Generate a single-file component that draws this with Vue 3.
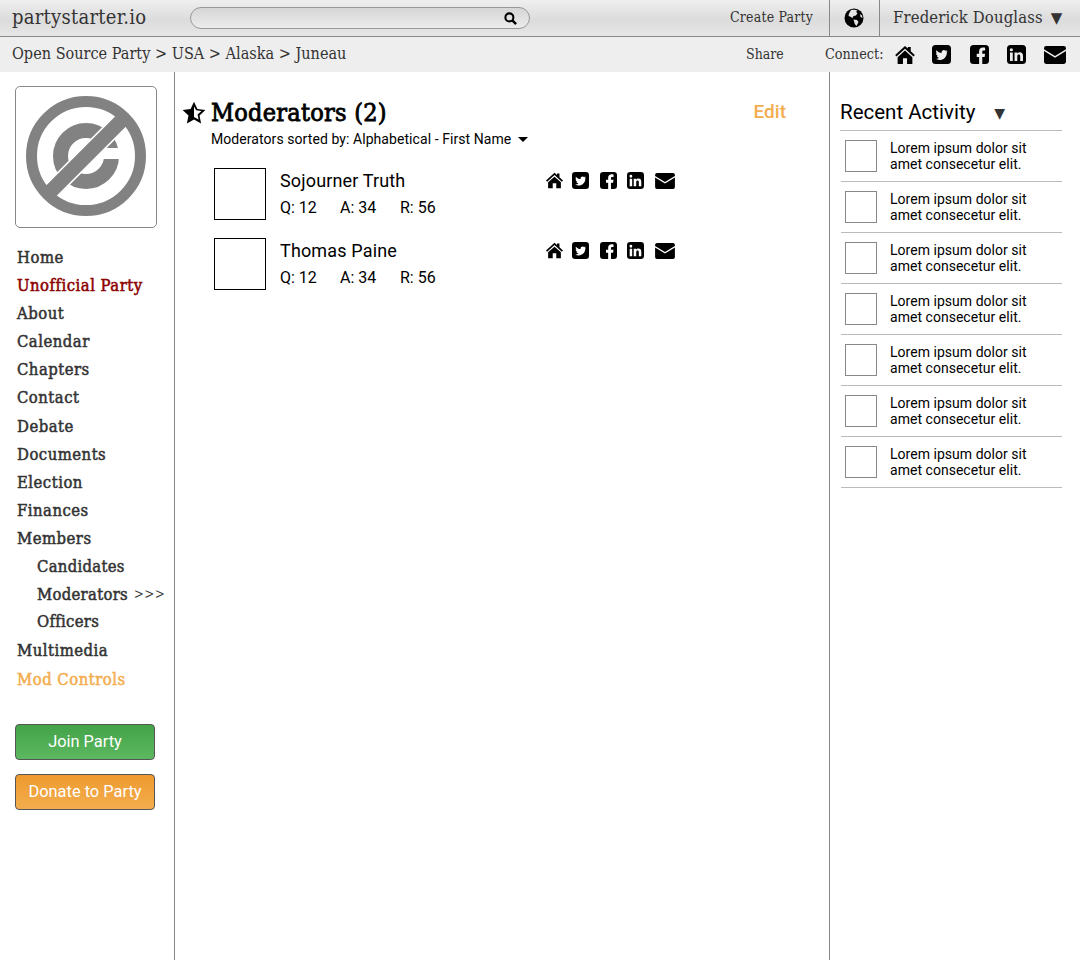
<script setup>
const navTop = ['Home', 'Unofficial Party', 'About', 'Calendar', 'Chapters', 'Contact', 'Debate', 'Documents', 'Election', 'Finances', 'Members']
const subNav = ['Candidates', 'Moderators', 'Officers']
const moderators = ['Sojourner Truth', 'Thomas Paine']
const activity = [1, 2, 3, 4, 5, 6, 7]

const icons = [
  { name: 'home', box: '0 0 24 22', d: 'M12 0 L15.5 3.2 V1.2 H19 V6.4 L24 11 L22.4 12.8 L12 3.4 L1.6 12.8 L0 11 Z M12 5.6 L21 13.6 V22 H14.5 V15 H9.5 V22 H3 V13.6 Z' },
  { name: 'twitter', box: '0 0 24 24', d: 'M4.5 0 H19.5 A4.5 4.5 0 0 1 24 4.5 V19.5 A4.5 4.5 0 0 1 19.5 24 H4.5 A4.5 4.5 0 0 1 0 19.5 V4.5 A4.5 4.5 0 0 1 4.5 0 Z M19.6 7.6 C19 7.9 18.4 8.1 17.7 8.2 C18.4 7.8 18.9 7.1 19.1 6.4 C18.5 6.8 17.8 7 17 7.2 C15.3 5.4 12 6.8 12.1 9.3 C12.1 9.6 12.1 9.8 12.2 10 C9.6 9.9 7.2 8.6 5.6 6.6 C4.8 8 5.2 9.9 6.5 10.8 C6 10.8 5.5 10.6 5.1 10.4 C5.1 12 6.2 13.4 7.7 13.7 C7.2 13.8 6.7 13.9 6.2 13.8 C6.6 15.1 7.9 16.1 9.3 16.1 C8 17.2 6.2 17.7 4.5 17.5 C10.8 21.4 19 17 18.8 9 C19.2 8.6 19.3 8.2 19.6 7.6 Z' },
  { name: 'facebook', box: '0 0 24 24', d: 'M4.5 0 H19.5 A4.5 4.5 0 0 1 24 4.5 V19.5 A4.5 4.5 0 0 1 19.5 24 H15.5 V15 H18.5 L19 11 H15.5 V8.8 C15.5 7.6 15.9 7 17.2 7 H19.1 V3.4 C18.5 3.3 17.4 3.2 16.3 3.2 C13.4 3.2 11.5 5 11.5 8.2 V11 H8.5 V15 H11.5 V24 H4.5 A4.5 4.5 0 0 1 0 19.5 V4.5 A4.5 4.5 0 0 1 4.5 0 Z' },
  { name: 'linkedin', box: '0 0 24 24', d: 'M4.5 0 H19.5 A4.5 4.5 0 0 1 24 4.5 V19.5 A4.5 4.5 0 0 1 19.5 24 H4.5 A4.5 4.5 0 0 1 0 19.5 V4.5 A4.5 4.5 0 0 1 4.5 0 Z M3.8 9.4 V20.2 H7.3 V9.4 Z M5.5 4 A2 2 0 1 0 5.5 8 A2 2 0 1 0 5.5 4 Z M9.5 9.4 V20.2 H13 V14.4 C13 12.8 13.7 12 14.9 12 C16.1 12 16.7 12.8 16.7 14.4 V20.2 H20.2 V13.8 C20.2 10.6 18.6 9.1 16.3 9.1 C14.7 9.1 13.6 9.9 13 10.9 V9.4 Z' },
  { name: 'mail', box: '0 0 26 21', d: 'M2.5 0 H23.5 A2.5 2.5 0 0 1 26 2.5 V3.8 L13 11.8 L0 3.8 V2.5 A2.5 2.5 0 0 1 2.5 0 Z M0 5.8 L13 13.8 L26 5.8 V18.5 A2.5 2.5 0 0 1 23.5 21 H2.5 A2.5 2.5 0 0 1 0 18.5 Z' }
]
</script>

<template>
  <div class="page">
    <header class="topbar">
      <div class="brand">partystarter.io</div>
      <div class="search">
        <svg class="search-icon" viewBox="0 0 14 14"><circle cx="5.8" cy="5.8" r="4.3" fill="none" stroke="#000" stroke-width="2.2" /><path d="M9 9 L13 13" stroke="#000" stroke-width="2.6" /></svg>
      </div>
      <div class="create">Create Party</div>
      <div class="globe-cell">
        <svg class="globe" viewBox="0 0 20 20">
          <circle cx="10" cy="10" r="9.5" fill="#000" />
          <path d="M7 2 C9 1.5 12 1.6 13.5 2.6 L12 4 L13.5 5 L12 7.5 L9.5 8 L8.5 10 L6 8.5 L4.5 8 L5 5.5 Z M9.5 11.5 L13 12 L14.5 14 L12.5 18 L10.8 16 Z M16 6 L18 7.5 L18.5 10 L16.5 9 Z" fill="#e4e4e4" />
        </svg>
      </div>
      <div class="user">Frederick Douglass<span class="tri">▼</span></div>
    </header>

    <div class="subbar">
      <div class="crumbs">Open Source Party &gt; USA &gt; Alaska &gt; Juneau</div>
      <div class="share">Share</div>
      <div class="connect">Connect:</div>
      <div class="icons big">
        <svg v-for="ic in icons" :key="ic.name" :class="ic.name" :viewBox="ic.box"><path :d="ic.d" fill-rule="evenodd" /></svg>
      </div>
    </div>

    <div class="body">
      <aside class="side">
        <div class="logo">
          <svg viewBox="0 0 140 140" width="140" height="140">
            <circle cx="70" cy="69" r="54.5" fill="none" stroke="#828282" stroke-width="11" />
            <circle cx="70" cy="69" r="25.5" fill="none" stroke="#828282" stroke-width="15" />
            <path d="M84 61 H106 V72 H84 Z" fill="#fff" />
            <path d="M38 101 L102 37" stroke="#fff" stroke-width="18" />
            <path d="M31 108 L109 30" stroke="#828282" stroke-width="14.5" />
          </svg>
        </div>
        <nav class="nav">
          <a v-for="item in navTop" :key="item" :class="{ active: item === 'Unofficial Party' }">{{ item }}</a>
          <div class="subnav">
            <a v-for="item in subNav" :key="item">{{ item }}<span v-if="item === 'Moderators'" class="arrows">&gt;&gt;&gt;</span></a>
          </div>
          <a class="multi">Multimedia</a>
          <a class="mod">Mod Controls</a>
        </nav>
        <button class="btn join">Join Party</button>
        <button class="btn donate">Donate to Party</button>
      </aside>

      <main class="main">
        <div class="title-row">
          <svg class="star" viewBox="0 0 24 24">
            <path d="M12 .8 L15.4 8 L23.4 9 L17.5 14.4 L19.1 22.4 L12 18.5 L4.9 22.4 L6.5 14.4 L.6 9 L8.6 8 Z M12 5.4 V16 L16.6 18.6 L15.6 13.4 L19.5 9.9 L14.2 9.2 Z" fill-rule="evenodd" />
          </svg>
          <h1>Moderators (2)</h1>
          <a class="edit">Edit</a>
        </div>
        <div class="sort">Moderators sorted by: Alphabetical - First Name<span class="caret"></span></div>
        <div v-for="name in moderators" :key="name" class="mod-row">
          <div class="thumb"></div>
          <div class="mod-info">
            <div class="mod-name">{{ name }}</div>
            <div class="stats"><span>Q: 12</span><span>A: 34</span><span>R: 56</span></div>
          </div>
          <div class="icons small">
            <svg v-for="ic in icons" :key="ic.name" :class="ic.name" :viewBox="ic.box"><path :d="ic.d" fill-rule="evenodd" /></svg>
          </div>
        </div>
      </main>

      <aside class="recent">
        <div class="recent-head">Recent Activity<span class="tri">▼</span></div>
        <div v-for="n in activity" :key="n" class="recent-row">
          <div class="recent-thumb"></div>
          <div class="recent-text">Lorem ipsum dolor sit<br />amet consecetur elit.</div>
        </div>
      </aside>
    </div>
  </div>
</template>

<style scoped>
.page { width: 1080px; height: 960px; overflow: hidden; font-family: Roboto, sans-serif; color: #000; background: #fff; }

.topbar { height: 36px; display: flex; align-items: center; border-bottom: 1px solid #888; background: linear-gradient(#efefef, #dcdcdc 55%, #e6e6e6); color: #333; font-family: "DejaVu Serif Condensed", "DejaVu Serif", serif; }
.brand { width: 190px; padding-left: 12px; box-sizing: border-box; font-size: 20px; letter-spacing: 0.25px; margin-top: -2px; }
.search { width: 340px; height: 22px; box-sizing: border-box; border: 1px solid #999; border-radius: 11px; display: flex; align-items: center; justify-content: flex-end; padding-right: 12px; background: linear-gradient(#d6d6d6, #ececec); }
.search-icon { width: 13px; height: 13px; }
.create { margin-left: auto; width: 99px; font-size: 14px; letter-spacing: 0.2px; margin-top: -2px; }
.globe-cell { width: 51px; height: 36px; box-sizing: border-box; border-left: 1px solid #888; border-right: 1px solid #888; display: flex; align-items: center; justify-content: center; }
.globe { width: 20px; height: 20px; margin-left: -1px; }
.user { width: 200px; padding-left: 13px; box-sizing: border-box; font-size: 16.5px; letter-spacing: 0.15px; white-space: nowrap; margin-top: -2px; }
.user .tri { font-family: "DejaVu Sans", sans-serif; font-size: 15px; margin-left: 8px; color: #333; }

.subbar { height: 35px; display: flex; align-items: center; background: #eee; color: #333; font-family: "DejaVu Serif Condensed", "DejaVu Serif", serif; }
.crumbs { width: 746px; flex: none; padding-left: 12px; box-sizing: border-box; font-size: 16.1px; margin-top: -2px; }
.share { width: 79px; flex: none; font-size: 14px; margin-top: -2px; }
.connect { width: 70px; flex: none; font-size: 14.3px; margin-top: -2px; }
.icons { display: flex; align-items: center; flex: none; }
.icons svg { fill: #000; display: block; }
.icons.big { gap: 18px; }
.icons.big svg { width: 19px; height: 19px; }
.icons.big .home { width: 20px; height: 18px; }
.icons.big .twitter { margin-left: -1px; }
.icons.big .facebook { margin-left: 1px; }
.icons.big .mail { width: 22px; height: 18px; }
.icons.small { gap: 10px; align-self: flex-start; margin-top: 4px; }
.icons.small svg { width: 17px; height: 17px; }
.icons.small .twitter { margin-left: -1px; }
.icons.small .facebook { margin-left: 1px; }
.icons.small .mail { width: 20px; height: 16px; margin-left: 1px; }

.body { display: flex; height: 888px; }

.side { width: 175px; box-sizing: border-box; border-right: 1px solid #888; padding: 14px 0 0 15px; }
.logo { width: 142px; height: 142px; box-sizing: border-box; border: 1px solid #888; border-radius: 5px; display: flex; align-items: center; justify-content: center; }
.nav { margin-top: 16px; font-family: "DejaVu Serif Condensed", "DejaVu Serif", serif; font-size: 16.5px; font-weight: 400; letter-spacing: 0.5px; -webkit-text-stroke: 0.5px #333; color: #333; }
.nav a { display: block; height: 28.1px; line-height: 28.1px; padding-left: 2px; white-space: nowrap; }
.nav .active { color: #8b0000; -webkit-text-stroke-color: #8b0000; }
.nav .mod { color: #f3ad4e; -webkit-text-stroke-color: #f3ad4e; margin-top: 1px; }
.nav .multi { margin-top: 1px; }
.subnav { padding-left: 20px; letter-spacing: 0.3px; }
.subnav a { height: 27.7px; line-height: 27.7px; }
.arrows { font-family: Roboto, sans-serif; font-weight: 300; -webkit-text-stroke: 0; font-size: 18px; line-height: 0; margin-left: 6px; letter-spacing: 1.2px; }
.btn { display: block; width: 140px; height: 36px; box-sizing: border-box; border: 1px solid #555; border-radius: 4px; color: #fff; font-family: Roboto, sans-serif; font-size: 16.4px; padding: 0; }
.join { margin-top: 29.5px; background: linear-gradient(#43a348, #5cb860); }
.donate { margin-top: 14px; background: linear-gradient(#ee9a2e, #f3ad4e); }

.main { width: 654px; box-sizing: border-box; padding: 28px 0 0 8px; }
.title-row { display: flex; align-items: center; height: 26px; }
.star { width: 24px; height: 24px; margin-right: 5px; margin-left: -1px; }
h1 { margin: 0; font-family: "DejaVu Serif Condensed", "DejaVu Serif", serif; font-size: 25px; font-weight: 400; letter-spacing: 0.25px; -webkit-text-stroke: 0.8px #000; line-height: 26px; }
.edit { margin-left: auto; margin-right: 43px; color: #f3ad4e; font-size: 19px; font-weight: 500; margin-top: -3px; }
.sort { margin: 3px 0 0 28px; font-size: 14px; letter-spacing: 0.07px; line-height: 20px; display: flex; align-items: center; }
.caret { width: 0; height: 0; margin-left: 7px; border-left: 5px solid transparent; border-right: 5px solid transparent; border-top: 5px solid #000; }
.mod-row { display: flex; height: 70px; margin-left: 31px; }
.sort + .mod-row { margin-top: 19px; }
.thumb { width: 52px; height: 52px; box-sizing: border-box; border: 1px solid #000; }
.mod-info { width: 266px; margin-left: 14px; }
.mod-name { font-size: 18px; letter-spacing: 0.15px; line-height: 26px; }
.stats { display: flex; font-size: 16px; line-height: 28px; }
.stats span { width: 60px; }

.recent { width: 251px; box-sizing: border-box; border-left: 1px solid #888; padding: 28px 18px 0 11px; }
.recent-head { height: 30px; font-size: 20.5px; line-height: 24px; border-bottom: 1px solid #bbb; margin-left: -1px; white-space: nowrap; }
.recent-head .tri { font-family: "DejaVu Sans", sans-serif; font-size: 14px; margin-left: 19px; color: #333; vertical-align: 1px; }
.recent-row { display: flex; height: 50px; border-bottom: 1px solid #bbb; align-items: center; }
.recent-thumb { width: 32px; height: 32px; box-sizing: border-box; border: 1px solid #888; margin-left: 4px; }
.recent-text { margin-left: 13px; font-size: 14px; letter-spacing: 0.03px; line-height: 16px; }
</style>
